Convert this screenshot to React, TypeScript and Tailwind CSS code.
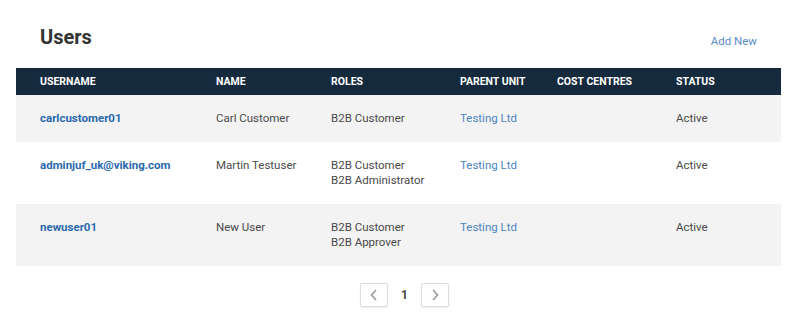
const users = [
  { username: "carlcustomer01", name: "Carl Customer", roles: ["B2B Customer"], unit: "Testing Ltd", status: "Active" },
  { username: "adminjuf_uk@viking.com", name: "Martin Testuser", roles: ["B2B Customer", "B2B Administrator"], unit: "Testing Ltd", status: "Active" },
  { username: "newuser01", name: "New User", roles: ["B2B Customer", "B2B Approver"], unit: "Testing Ltd", status: "Active" },
];

const cols = ["USERNAME", "NAME", "ROLES", "PARENT UNIT", "COST CENTRES", "STATUS"];
const widths = ["w-[176px]", "w-[115px]", "w-[129px]", "w-[97px]", "w-[119px]", "flex-1"];

export default function App() {
  return (
    <div className="min-h-[323px] bg-white pl-4 pr-[19px] font-['Roboto',sans-serif] text-[#4a4a4a]">
      <div className="flex items-end justify-between pl-6 pr-6 pt-[26px] pb-[20px]">
        <h1 className="text-[20px] font-bold leading-[22px] text-[#333]">Users</h1>
        <a className="mb-[-2px] text-[11.5px] text-[#5a8cc4]" href="#">
          Add New
        </a>
      </div>

      <div>
        <div className="flex h-[27px] items-center bg-[#162a3d] pl-6 text-[10.5px] font-bold text-white">
          {cols.map((c, i) => (
            <div className={widths[i]} key={c}>
              {c}
            </div>
          ))}
        </div>
        {users.map((u, r) => (
          <div className={`flex py-4 pl-6 text-[11.5px] leading-[15px] ${r % 2 === 0 ? "bg-[#f3f3f3]" : "bg-white"}`} key={u.username}>
            <div className="w-[176px] font-bold text-[#2a69ad]">{u.username}</div>
            <div className="w-[115px]">{u.name}</div>
            <div className="w-[129px]">
              {u.roles.map((role) => (
                <div key={role}>{role}</div>
              ))}
            </div>
            <div className="w-[97px] text-[#4b84c0]">{u.unit}</div>
            <div className="w-[119px]" />
            <div className="flex-1">{u.status}</div>
          </div>
        ))}
      </div>

      <div className="flex items-center justify-center gap-[13px] pl-3 pt-[17px]">
        <button className="flex h-[24px] w-[28px] items-center justify-center rounded-[2px] border border-[#ddd] bg-white text-[#999] shadow-[0_1px_2px_rgba(0,0,0,0.08)]">
          <svg width="8" height="12" viewBox="0 0 8 12" fill="none" stroke="currentColor" strokeWidth="1.6">
            <path d="M6 1L1.5 6L6 11" />
          </svg>
        </button>
        <span className="text-[12px] font-bold text-[#444]">1</span>
        <button className="flex h-[24px] w-[28px] items-center justify-center rounded-[2px] border border-[#ddd] bg-white text-[#999] shadow-[0_1px_2px_rgba(0,0,0,0.08)]">
          <svg width="8" height="12" viewBox="0 0 8 12" fill="none" stroke="currentColor" strokeWidth="1.6">
            <path d="M2 1L6.5 6L2 11" />
          </svg>
        </button>
      </div>
    </div>
  );
}
